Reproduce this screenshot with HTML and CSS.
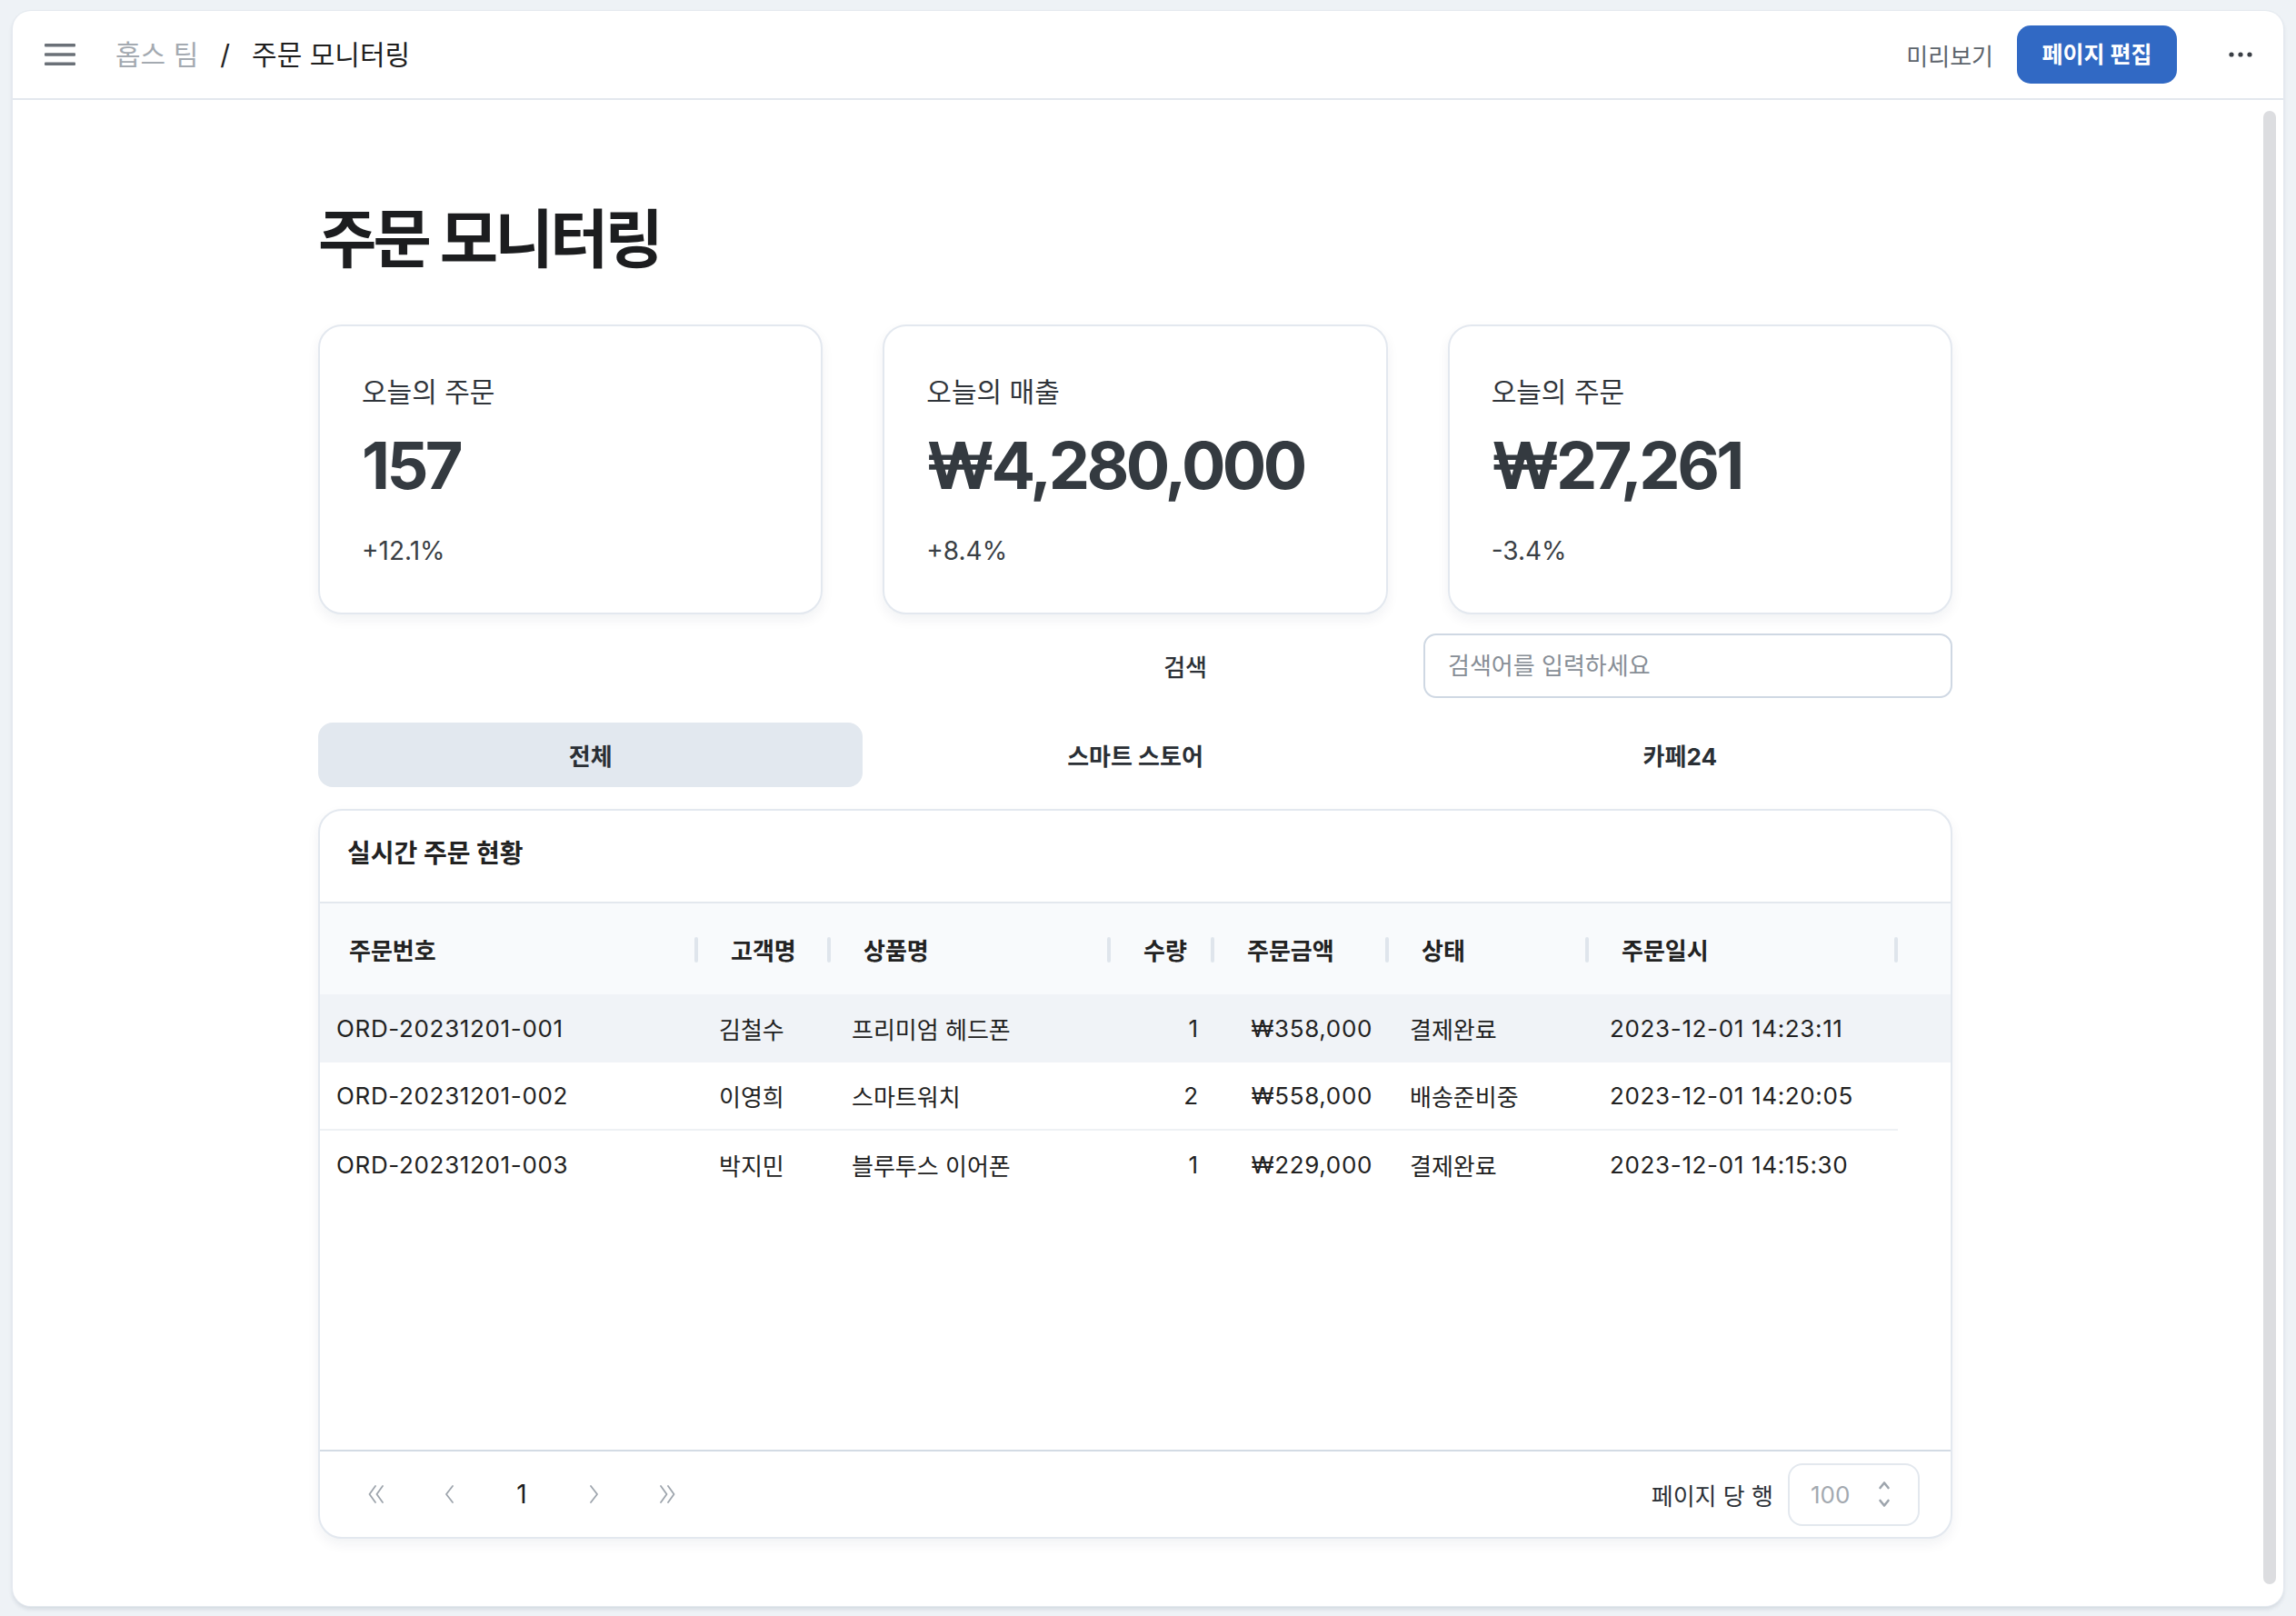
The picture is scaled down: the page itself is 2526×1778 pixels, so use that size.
FILE: index.html
```html
<!DOCTYPE html>
<html lang="ko">
<head>
<meta charset="utf-8">
<title>주문 모니터링</title>
<link rel="stylesheet" href="styles.css">
</head>
<body>
<div class="panel">
  <header class="topbar">
    <div class="crumbs">
      <svg class="menu-icon" viewBox="0 0 34 24" aria-hidden="true">
        <rect x="0" y="0" width="34" height="3.5" rx="1"/>
        <rect x="0" y="10.3" width="34" height="3.5" rx="1"/>
        <rect x="0" y="20.5" width="34" height="3.5" rx="1"/>
      </svg>
      <span class="crumb-team">홉스 팀</span>
      <span class="crumb-sep">/</span>
      <span class="crumb-page">주문 모니터링</span>
    </div>
    <div class="actions">
      <span class="preview">미리보기</span>
      <button class="edit-btn">페이지 편집</button>
      <svg class="more-icon" viewBox="0 0 26 6" aria-hidden="true">
        <circle cx="3" cy="3" r="2.6"/>
        <circle cx="13" cy="3" r="2.6"/>
        <circle cx="23" cy="3" r="2.6"/>
      </svg>
    </div>
  </header>

  <div class="body">
    <main class="content">
      <div class="content-inner">
        <h1 class="page-title">주문 모니터링</h1>

        <div class="stats">
          <div class="stat-card">
            <div class="stat-label">오늘의 주문</div>
            <div class="stat-value">157</div>
            <div class="stat-change">+12.1%</div>
          </div>
          <div class="stat-card">
            <div class="stat-label">오늘의 매출</div>
            <div class="stat-value">₩4,280,000</div>
            <div class="stat-change">+8.4%</div>
          </div>
          <div class="stat-card">
            <div class="stat-label">오늘의 주문</div>
            <div class="stat-value">₩27,261</div>
            <div class="stat-change">-3.4%</div>
          </div>
        </div>

        <div class="search-row">
          <label class="search-label" for="q">검색</label>
          <input class="search-input" id="q" type="text" placeholder="검색어를 입력하세요">
        </div>

        <div class="tabs">
          <div class="tab active">전체</div>
          <div class="tab">스마트 스토어</div>
          <div class="tab">카페24</div>
        </div>

        <section class="table-card">
          <div class="table-title">실시간 주문 현황</div>
          <div class="grid-row grid-head">
            <div class="hcell first">주문번호</div>
            <div class="hcell">고객명</div>
            <div class="hcell">상품명</div>
            <div class="hcell">수량</div>
            <div class="hcell">주문금액</div>
            <div class="hcell">상태</div>
            <div class="hcell">주문일시</div>
            <div class="hcell filler"></div>
          </div>
          <div class="grid-row data-row hover">
            <div class="cell first figures">ORD-20231201-001</div>
            <div class="cell">김철수</div>
            <div class="cell">프리미엄 헤드폰</div>
            <div class="cell num">1</div>
            <div class="cell num figures">₩358,000</div>
            <div class="cell">결제완료</div>
            <div class="cell figures">2023-12-01 14:23:11</div>
            <div class="cell filler"></div>
          </div>
          <div class="grid-row data-row divided">
            <div class="cell first figures">ORD-20231201-002</div>
            <div class="cell">이영희</div>
            <div class="cell">스마트워치</div>
            <div class="cell num">2</div>
            <div class="cell num figures">₩558,000</div>
            <div class="cell">배송준비중</div>
            <div class="cell figures">2023-12-01 14:20:05</div>
            <div class="cell filler"></div>
          </div>
          <div class="grid-row data-row">
            <div class="cell first figures">ORD-20231201-003</div>
            <div class="cell">박지민</div>
            <div class="cell">블루투스 이어폰</div>
            <div class="cell num">1</div>
            <div class="cell num figures">₩229,000</div>
            <div class="cell">결제완료</div>
            <div class="cell figures">2023-12-01 14:15:30</div>
            <div class="cell filler"></div>
          </div>
          <div class="table-spacer"></div>
          <div class="table-footer">
            <div class="pager">
              <span class="pg-btn">
                <svg viewBox="0 0 22 20" width="22" height="20" aria-hidden="true"><path d="M10 1 L3.5 10 L10 19 M18 1 L11.5 10 L18 19"/></svg>
              </span>
              <span class="pg-btn">
                <svg viewBox="0 0 12 20" width="12" height="20" aria-hidden="true"><path d="M10 1 L3 10 L10 19"/></svg>
              </span>
              <span class="pg-btn pg-num">1</span>
              <span class="pg-btn">
                <svg viewBox="0 0 12 20" width="12" height="20" aria-hidden="true"><path d="M2 1 L9 10 L2 19"/></svg>
              </span>
              <span class="pg-btn">
                <svg viewBox="0 0 22 20" width="22" height="20" aria-hidden="true"><path d="M4 1 L10.5 10 L4 19 M12 1 L18.5 10 L12 19"/></svg>
              </span>
            </div>
            <div class="rows-per-page">
              <span>페이지 당 행</span>
              <div class="select">
                <span>100</span>
                <svg class="stepper" viewBox="0 0 14 30" width="14" height="30" aria-hidden="true"><path d="M2.5 8 L7 2.5 L11.5 8 M2.5 22 L7 27.5 L11.5 22"/></svg>
              </div>
            </div>
          </div>
        </section>
      </div>
    </main>
    <div class="scrollbar"><div class="thumb"></div></div>
  </div>
</div>
</body>
</html>
```
FILE: styles.css
```css
* { box-sizing: border-box; }

html, body { margin: 0; }

body {
  background: #eef2f6;
  font-family: Inter, "Noto Sans CJK KR", sans-serif;
  color: #222;
  padding: 12px 14px 11px;
  height: 1778px;
  overflow: hidden;
}

.panel {
  height: 1755px;
  background: #fff;
  border-radius: 20px;
  box-shadow: 0 0 0 1px #e4e9ef, 0 3px 5px rgba(30, 50, 80, 0.14);
  display: flex;
  flex-direction: column;
  overflow: hidden;
}

/* ---------- top bar ---------- */
.topbar {
  height: 98px;
  flex-shrink: 0;
  border-bottom: 2px solid #e3e8ee;
  display: flex;
  align-items: center;
  justify-content: space-between;
  padding: 0 34px 0 35px;
}

.crumbs {
  display: flex;
  align-items: center;
  font-size: 30px;
  line-height: 42px;
}

.menu-icon {
  width: 34px;
  height: 24px;
  fill: #6b7178;
  margin-right: 44px;
}

.crumb-team { color: #a4aab1; }
.crumb-sep { color: #222; margin: 0 24px; }
.crumb-page { color: #1e1e1e; }

.actions {
  display: flex;
  align-items: center;
}

.preview {
  font-size: 26px;
  color: #5d646c;
  margin-right: 26px;
}

.edit-btn {
  height: 64px;
  width: 176px;
  border: 0;
  border-radius: 15px;
  background: #3169c4;
  color: #fff;
  font-family: Inter, "Noto Sans CJK KR", sans-serif;
  font-size: 25px;
  font-weight: 700;
  line-height: 1;
  padding: 0;
}

.more-icon {
  width: 26px;
  height: 6px;
  fill: #3a3f45;
  margin-left: 57px;
}

/* ---------- body ---------- */
.body {
  flex: 1;
  min-height: 0;
  display: flex;
}

.content {
  flex: 1;
  padding-top: 108px;
  display: flex;
  justify-content: center;
}

.content-inner {
  width: 1798px;
}

.scrollbar {
  width: 28px;
  flex-shrink: 0;
  padding: 12px 8px 24px 6px;
}

.thumb {
  height: 100%;
  background: #dcdde0;
  border-radius: 7px;
}

.page-title {
  margin: 0 0 48px;
  font-size: 70px;
  font-weight: 700;
  line-height: 91px;
  letter-spacing: -0.055em;
  color: #1c1d1f;
}

/* ---------- stat cards ---------- */
.stats {
  display: grid;
  grid-template-columns: repeat(3, 1fr);
  gap: 66px;
}

.stat-card {
  height: 319px;
  border: 2px solid #e3e8ef;
  border-radius: 26px;
  background: #fff;
  box-shadow: 0 6px 14px rgba(20, 40, 70, 0.06);
  padding: 50px 46px 0;
}

.stat-label {
  font-size: 30px;
  line-height: 44px;
  color: #2f343a;
}

.stat-value {
  margin-top: 16px;
  font-size: 72px;
  font-weight: 700;
  line-height: 86px;
  letter-spacing: -0.05em;
  color: #343a40;
}

.stat-change {
  margin-top: 30px;
  font-size: 28px;
  line-height: 43px;
  color: #3a3f45;
}

/* ---------- search ---------- */
.search-row {
  margin-top: 21px;
  display: flex;
  align-items: center;
  justify-content: flex-end;
}

.search-label {
  font-size: 26px;
  font-weight: 500;
  color: #2c3137;
  margin-right: 238px;
}

.search-input {
  width: 582px;
  height: 71px;
  border: 2px solid #cfd8e3;
  border-radius: 14px;
  padding: 0 0 0 25px;
  font-family: Inter, "Noto Sans CJK KR", sans-serif;
  font-size: 26px;
  color: #222;
  outline: none;
}

.search-input::placeholder { color: #878e96; }

/* ---------- tabs ---------- */
.tabs {
  margin-top: 27px;
  height: 71px;
  display: grid;
  grid-template-columns: repeat(3, 1fr);
}

.tab {
  display: flex;
  align-items: center;
  justify-content: center;
  font-size: 26px;
  font-weight: 700;
  color: #2a2f35;
  border-radius: 16px;
}

.tab.active { background: #e2e8ef; }

/* ---------- table card ---------- */
.table-card {
  margin-top: 24px;
  height: 803px;
  border: 2px solid #e3e8ef;
  border-radius: 26px;
  background: #fff;
  box-shadow: 0 6px 14px rgba(20, 40, 70, 0.06);
  display: flex;
  flex-direction: column;
  overflow: hidden;
}

.table-title {
  height: 102px;
  flex-shrink: 0;
  padding: 26px 30px 0;
  border-bottom: 2px solid #e3e8ee;
  font-size: 28px;
  font-weight: 700;
  line-height: 42px;
  color: #222;
}

.grid-row {
  display: grid;
  grid-template-columns: 416px 146px 308px 114px 192px 220px 340px 1fr;
  flex-shrink: 0;
}

.grid-head {
  height: 100px;
  background: #f8fafc;
}

.hcell {
  position: relative;
  display: flex;
  align-items: center;
  padding-left: 36px;
  font-size: 26px;
  font-weight: 700;
  color: #222;
}

.hcell.first { padding-left: 32px; }

.hcell::after {
  content: "";
  position: absolute;
  right: 0;
  top: 37px;
  width: 4px;
  height: 28px;
  border-radius: 2px;
  background: #dfe5ec;
}

.hcell.filler::after { display: none; }

.data-row { height: 75px; }
.data-row.hover { background: #f0f3f7; }

.cell {
  display: flex;
  align-items: center;
  padding-left: 23px;
  font-size: 26px;
  color: #222;
  white-space: nowrap;
}

.cell.figures { letter-spacing: 0.025em; }

.cell.first { padding-left: 18px; }

.cell.num {
  justify-content: flex-end;
  padding: 0 18px 0 0;
}

.data-row.divided .cell:not(.filler) { border-bottom: 2px solid #eef1f4; }

.table-spacer { flex: 1; }

.table-footer {
  height: 96px;
  flex-shrink: 0;
  border-top: 2px solid #d3dbe4;
  display: flex;
  align-items: center;
  justify-content: space-between;
  padding: 0 34px 0 30px;
}

.pager {
  display: flex;
  align-items: center;
  gap: 16px;
}

.pg-btn {
  width: 64px;
  height: 56px;
  display: flex;
  align-items: center;
  justify-content: center;
}

.pg-btn svg {
  fill: none;
  stroke: #9ea5ad;
  stroke-width: 1.8;
  stroke-linecap: round;
  stroke-linejoin: round;
}

.pg-num {
  font-size: 28px;
  color: #1e1e1e;
}

.rows-per-page {
  display: flex;
  align-items: center;
  gap: 16px;
  font-size: 26px;
  color: #2c3137;
}

.select {
  width: 145px;
  height: 69px;
  border: 2px solid #e3e8ee;
  border-radius: 16px;
  display: flex;
  align-items: center;
  justify-content: space-between;
  padding: 0 30px 0 23px;
  color: #a3a9b0;
}

.stepper {
  fill: none;
  stroke: #9ea5ad;
  stroke-width: 2.6;
  stroke-linecap: round;
  stroke-linejoin: round;
}
```
